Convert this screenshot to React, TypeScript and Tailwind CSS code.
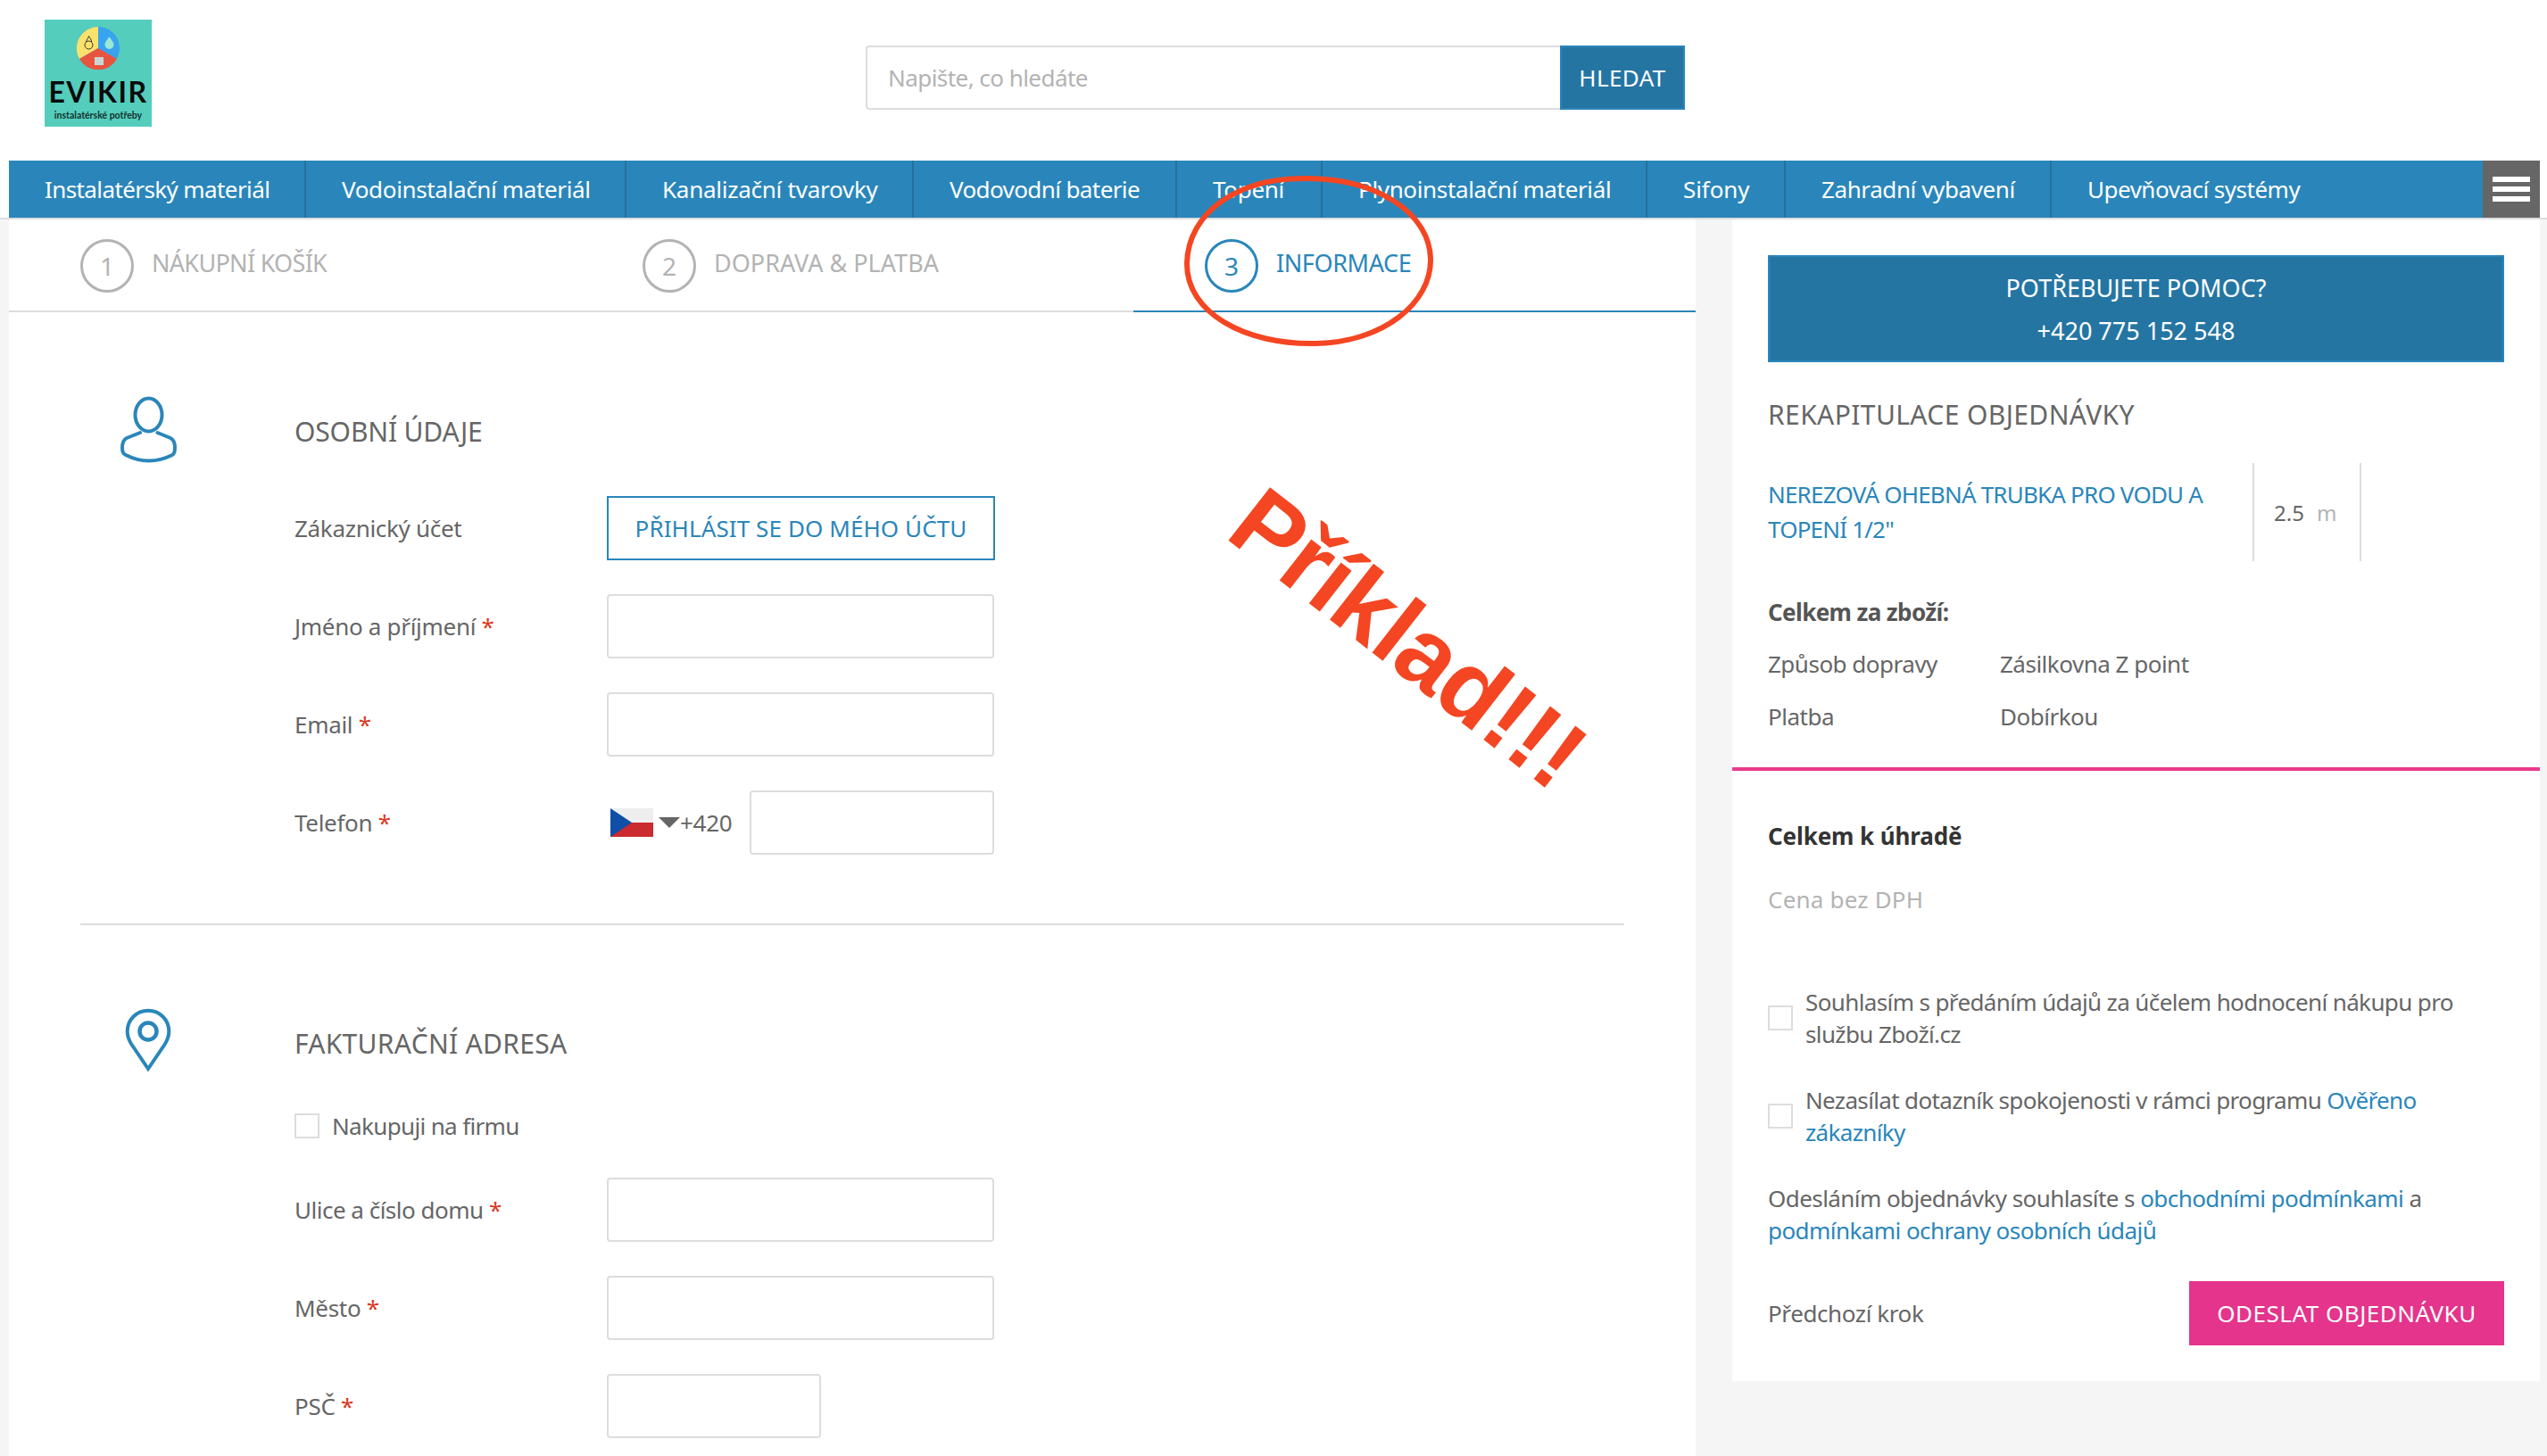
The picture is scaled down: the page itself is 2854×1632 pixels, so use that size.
const navItems = [
  { label: "Instalatérský materiál", width: "w-[333px]", tracking: "tracking-[-0.6px]" },
  { label: "Vodoinstalační materiál", width: "w-[359px]", tracking: "tracking-[-0.35px]" },
  { label: "Kanalizační tvarovky", width: "w-[322px]", tracking: "tracking-[-0.25px]" },
  { label: "Vodovodní baterie", width: "w-[295px]", tracking: "tracking-[-0.6px]" },
  { label: "Topení", width: "w-[163px]", tracking: "tracking-[-0.3px]" },
  { label: "Plynoinstalační materiál", width: "w-[364px]", tracking: "tracking-[-0.35px]" },
  { label: "Sifony", width: "w-[155px]", tracking: "tracking-[-0.1px]" },
  { label: "Zahradní vybavení", width: "w-[298px]", tracking: "tracking-[-0.4px]" },
];

function Logo() {
  return (
    <div className="w-[120px] h-[120px] bg-[#55cdbc] flex flex-col items-center pt-[8px]">
      <svg width="48" height="48" viewBox="0 0 48 48" className="shrink-0">
        <circle cx="24" cy="24" r="24" fill="#38a3ee" />
        <path d="M24 24 L24 0 A24 24 0 0 0 3 36 Z" fill="#fbe26c" />
        <path d="M24 24 L3 36 A24 24 0 0 0 45 36 Z" fill="#e8553f" />
        <path d="M36.5 11 C39 15 41.5 17.5 41.5 20 A5 5 0 0 1 31.5 20 C31.5 17.5 34 15 36.5 11 Z" fill="#9ce8d6" />
        <rect x="20" y="34" width="10" height="9" fill="#c9d6d8" />
        <circle cx="13.5" cy="20.5" r="4.5" fill="none" stroke="#333" strokeWidth="1" />
        <path d="M10.5 17 C11 14 13 13 13.5 10.5 C15 13 16.5 14 16.5 17" fill="none" stroke="#333" strokeWidth="1" />
      </svg>
      <div className="font-['Lato'] font-bold text-[32px] leading-[34px] tracking-[1.5px] mt-[8px] text-[#0a0a0a]">EVIKIR</div>
      <div className="font-['Lato'] font-bold text-[10.5px] leading-[12px] mt-[3px] text-[#12332f]">instalatérské potřeby</div>
    </div>
  );
}

function Header() {
  return (
    <header className="h-[180px] bg-white relative flex items-start">
      <div className="ml-[50px] mt-[22px]"><Logo /></div>
      <div className="ml-[800px] mt-[51px] flex h-[72px] w-[918px]">
        <input
          placeholder="Napište, co hledáte"
          className="w-[778px] h-full border-2 border-r-0 border-[#ddd] rounded-l-[4px] pl-[23px] text-[26px] tracking-[-0.55px] placeholder:text-[#b3b3b3] outline-none"
        />
        <button className="w-[140px] h-full bg-[#2575a3] border-2 border-[#2a86ba] text-white text-[26px] tracking-[0.4px]">HLEDAT</button>
      </div>
    </header>
  );
}

function Nav() {
  return (
    <nav className="pl-[10px] pr-[8px] bg-white">
      <div className="flex h-[64px] bg-[#2a86ba] text-white text-[26px]">
        {navItems.map((item) => (
          <div key={item.label} className={`${item.width} ${item.tracking} pl-[40px] flex items-center border-r-2 border-[#25719e] whitespace-nowrap`}>
            {item.label}
          </div>
        ))}
        <div className="flex-1 pl-[40px] flex items-center whitespace-nowrap tracking-[-0.5px]">Upevňovací systémy</div>
        <div className="w-[64px] bg-[#666] flex flex-col items-center justify-center gap-[5px]">
          <div className="w-[42px] h-[6px] bg-white" />
          <div className="w-[42px] h-[6px] bg-white" />
          <div className="w-[42px] h-[6px] bg-white" />
        </div>
      </div>
    </nav>
  );
}

function Step({ n, label, active, labelClass }: { n: number; label: string; active?: boolean; labelClass?: string }) {
  return (
    <div className={`w-[630px] h-[104px] pl-[80px] flex items-start border-b-2 ${active ? "border-[#2a86ba] text-[#2a86ba]" : "border-[#ddd] text-[#b3b3b3]"}`}>
      <div className={`w-[60px] h-[60px] mt-[22px] rounded-full border-[3px] flex items-center justify-center text-[28px] ${active ? "border-[#2a86ba]" : "border-[#b3b3b3]"}`}>
        {n}
      </div>
      <div className={`ml-[20px] mt-[29px] text-[27px] leading-[40px] ${labelClass ?? ""}`}>{label}</div>
    </div>
  );
}

function Field({ label, width = "w-[434px]", labelClass = "tracking-[-0.3px]" }: { label: string; width?: string; labelClass?: string }) {
  return (
    <div className="flex items-center h-[72px] mb-[38px]">
      <div className={`w-[350px] text-[26px] text-[#666] ${labelClass}`}>
        {label} <span className="text-[#d9381e]">*</span>
      </div>
      <input className={`${width} h-[72px] border-2 border-[#ddd] rounded-[4px] outline-none`} />
    </div>
  );
}

function PersonIcon() {
  return (
    <svg width="66" height="78" viewBox="0 0 66 78" fill="none" stroke="#2a86ba" strokeWidth="4" strokeLinecap="round">
      <ellipse cx="33.5" cy="23" rx="15" ry="18.5" />
      <path d="M24 43 L9 49 C5 51 4 54 4 60 C4 65 5 67 8 68 C16 72 24 74.5 33.5 74.5 C43 74.5 52 72 60 68 C62 67 63 65 63 60 C63 54 62 51 58 49 L43.5 43" />
    </svg>
  );
}

function PinIcon() {
  return (
    <svg width="54" height="76" viewBox="0 0 54 76" fill="none" stroke="#2a86ba">
      <path d="M27 4.7 C14 4.7 3.7 15 3.7 28 C3.7 33 5 37 8 42 L27 70 L46 42 C49 37 50.3 33 50.3 28 C50.3 15 40 4.7 27 4.7 Z" strokeWidth="4" />
      <circle cx="27" cy="28" r="9.5" strokeWidth="4.5" />
    </svg>
  );
}

function CheckBox() {
  return <div className="w-[28px] h-[28px] border-2 border-[#ddd] shrink-0" />;
}

function FormColumn() {
  return (
    <div className="w-[1890px] bg-white">
      <div className="flex">
        <Step n={1} label="NÁKUPNÍ KOŠÍK" labelClass="tracking-[-0.7px]" />
        <Step n={2} label="DOPRAVA & PLATBA" />
        <Step n={3} label="INFORMACE" active labelClass="tracking-[-0.4px]" />
      </div>

      <section className="ml-[80px] w-[1730px] pt-[92px] border-b-2 border-[#ddd] flex">
        <div className="w-[240px] pl-[43px]"><PersonIcon /></div>
        <div className="pb-[39px]">
          <h2 className="mt-[22px] h-[40px] mb-[52px] text-[30px] leading-[40px] tracking-[-0.15px] text-[#666]">OSOBNÍ ÚDAJE</h2>
          <div className="flex items-center h-[72px] mb-[38px]">
            <div className="w-[350px] text-[26px] tracking-[-0.3px] text-[#666]">Zákaznický účet</div>
            <button className="w-[435px] h-[72px] border-2 border-[#2a86ba] text-[#2a86ba] text-[26px] tracking-[0.1px]">PŘIHLÁSIT SE DO MÉHO ÚČTU</button>
          </div>
          <Field label="Jméno a příjmení" />
          <Field label="Email" />
          <div className="flex items-center h-[72px] mb-[38px]">
            <div className="w-[350px] text-[26px] tracking-[-0.3px] text-[#666]">
              Telefon <span className="text-[#d9381e]">*</span>
            </div>
            <div className="w-[160px] flex items-center pl-[4px]">
              <svg width="48" height="32" viewBox="0 0 48 32" className="shrink-0">
                <rect width="48" height="16" fill="#eeeeee" />
                <rect y="16" width="48" height="16" fill="#cb2a2e" />
                <path d="M0 0 L24 16 L0 32 Z" fill="#0f4fa8" />
              </svg>
              <div className="ml-[6px] w-0 h-0 border-l-[12px] border-r-[12px] border-t-[12px] border-l-transparent border-r-transparent border-t-[#666]" />
              <span className="text-[26px] tracking-[-0.3px] text-[#666]">+420</span>
            </div>
            <input className="w-[274px] h-[72px] border-2 border-[#ddd] rounded-[4px] outline-none" />
          </div>
        </div>
      </section>

      <section className="ml-[80px] w-[1730px] pt-[91px] flex">
        <div className="w-[240px] pl-[49px]"><PinIcon /></div>
        <div>
          <h2 className="mt-[22px] h-[40px] text-[30px] leading-[40px] tracking-[0.3px] text-[#666]">FAKTURAČNÍ ADRESA</h2>
          <div className="mt-[58px] mb-[44px] h-[28px] flex items-center">
            <CheckBox />
            <span className="ml-[14px] text-[26px] tracking-[-0.65px] text-[#666]">Nakupuji na firmu</span>
          </div>
          <Field label="Ulice a číslo domu" labelClass="tracking-[-0.5px]" />
          <Field label="Město" />
          <Field label="PSČ" width="w-[240px]" />
        </div>
      </section>
    </div>
  );
}

function Sidebar() {
  return (
    <aside className="w-[905px] h-[1302px] bg-white">
      <div className="px-[40px] pt-[40px]">
        <div className="h-[120px] pt-[1px] bg-[#2575a3] border-2 border-[#2a86ba] text-white text-[27px] leading-[48px] text-center flex flex-col justify-center">
          <div>POTŘEBUJETE POMOC?</div>
          <div>+420 775 152 548</div>
        </div>
        <h2 className="mt-[39px] h-[40px] text-[30px] leading-[40px] tracking-[0.4px] text-[#666]">REKAPITULACE OBJEDNÁVKY</h2>
        <div className="mt-[34px] flex h-[110px]">
          <div className="w-[543px] text-[26px] leading-[39px] tracking-[-0.8px] text-[#2a86ba] self-center">NEREZOVÁ OHEBNÁ TRUBKA PRO VODU A TOPENÍ 1/2"</div>
          <div className="w-[122px] border-x-2 border-[#ddd] pl-[22px] pt-[2px] flex items-center text-[24px] text-[#666]">
            2.5 <span className="ml-[14px] text-[#b3b3b3]">m</span>
          </div>
        </div>
        <div className="mt-[37px] h-[40px] text-[26px] leading-[40px] tracking-[-0.6px] font-bold text-[#555]">Celkem za zboží:</div>
        <div className="mt-[18px] flex h-[40px] text-[26px] leading-[40px] tracking-[-0.5px] text-[#666]">
          <div className="w-[260px]">Způsob dopravy</div>
          <div>Zásilkovna Z point</div>
        </div>
        <div className="mt-[19px] flex h-[40px] text-[26px] leading-[40px] tracking-[-0.5px] text-[#666]">
          <div className="w-[260px]">Platba</div>
          <div>Dobírkou</div>
        </div>
      </div>
      <div className="mt-[37px] h-[4px] bg-[#ea3a8c]" />
      <div className="px-[40px]">
        <div className="mt-[53px] h-[40px] text-[26px] leading-[40px] tracking-[-0.1px] font-bold text-[#333]">Celkem k úhradě</div>
        <div className="mt-[31px] h-[40px] text-[26px] leading-[40px] tracking-[0.2px] text-[#b3b3b3]">Cena bez DPH</div>
        <div className="mt-[77px] flex items-center gap-[14px] text-[26px] leading-[36px] tracking-[-0.62px] text-[#666]">
          <CheckBox />
          <div>Souhlasím s předáním údajů za účelem hodnocení nákupu pro službu Zboží.cz</div>
        </div>
        <div className="mt-[38px] flex items-center gap-[14px] text-[26px] leading-[36px] tracking-[-0.65px] text-[#666]">
          <CheckBox />
          <div>
            Nezasílat dotazník spokojenosti v rámci programu <span className="text-[#2a86ba]">Ověřeno zákazníky</span>
          </div>
        </div>
        <div className="mt-[38px] text-[26px] leading-[36px] tracking-[-0.56px] text-[#666]">
          Odesláním objednávky souhlasíte s <span className="text-[#2a86ba]">obchodními podmínkami</span> a{" "}
          <span className="text-[#2a86ba]">podmínkami ochrany osobních údajů</span>
        </div>
        <div className="mt-[39px] flex items-center justify-between">
          <span className="text-[26px] tracking-[-0.4px] text-[#666]">Předchozí krok</span>
          <button className="w-[353px] h-[72px] bg-[#e5348b] text-white text-[26px] tracking-[0.5px]">ODESLAT OBJEDNÁVKU</button>
        </div>
      </div>
    </aside>
  );
}

export default function App() {
  return (
    <div className="relative w-[2854px] h-[1632px] overflow-hidden bg-[#f5f5f5] font-['Noto_Sans',sans-serif]">
      <Header />
      <Nav />
      <div className="h-[2px] bg-[#ddd]" />
      <main className="flex pl-[10px]">
        <FormColumn />
        <div className="w-[41px]" />
        <Sidebar />
      </main>

      {/* annotation drawn over the screenshot */}
      <svg className="absolute left-[1325px] top-[195px]" width="284" height="196" viewBox="0 0 284 196" fill="none">
        <path
          d="M142 5 C60 3 6 45 5 100 C4 155 70 192 150 190 C225 188 279 145 278 95 C277 45 220 6 142 5 Z"
          stroke="#f44622"
          strokeWidth="6"
        />
      </svg>
      <div className="absolute left-[1373px] top-[655px] w-[410px] text-center origin-center rotate-[38deg] font-['Liberation_Sans'] font-bold text-[110px] leading-[120px] tracking-[-1px] text-[#f44622] whitespace-nowrap flex justify-center">
        Příklad!!!
      </div>
    </div>
  );
}
